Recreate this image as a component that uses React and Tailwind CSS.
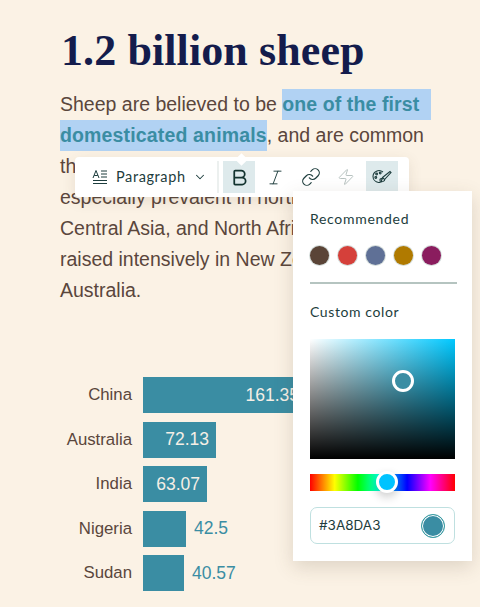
import { Bold, ChevronDown, Italic, Link, Zap } from 'lucide-react';

const swatches = ['#5a4437', '#d5403a', '#5f7096', '#b07a00', '#8a1c5e'];

const rows = [
  { name: 'China', value: '161.35', width: 'w-[163px]', inside: true },
  { name: 'Australia', value: '72.13', width: 'w-[73px]', inside: true },
  { name: 'India', value: '63.07', width: 'w-[64px]', inside: true },
  { name: 'Nigeria', value: '42.5', width: 'w-[43px]' },
  { name: 'Sudan', value: '40.57', width: 'w-[41px]' },
];

function ParagraphIcon() {
  return (
    <svg width="16" height="16" viewBox="0 0 16 16" fill="none" stroke="#1d3d3d" strokeWidth="1">
      <path d="M1 9 L4 1.5 L7 9 M2.2 6.5 H5.8" />
      <path d="M9 2 H15 M9 5 H15 M9 8 H15 M1 11.5 H15 M1 14.5 H15" />
    </svg>
  );
}

function PaletteIcon() {
  return (
    <svg width="20" height="16" viewBox="0 0 20 16" fill="none" stroke="#1d3d3d" strokeWidth="1.1">
      <path d="M11 3 C9 1.5 6.5 1.2 4.5 2.2 C2 3.4 1 5.5 1 7.5 C1 10.5 3.5 13 6.5 13.5 C8 13.7 8.6 12.8 8.1 11.6 C7.6 10.4 8.3 9.6 9.5 9.6 L10.5 9.6" />
      <circle cx="3.8" cy="8.5" r="0.9" />
      <circle cx="4.6" cy="5" r="0.9" />
      <circle cx="8.2" cy="4" r="0.9" />
      <path d="M10.5 8.5 L18 2.5 L19 3.5 L12.5 10.5 Z" />
      <path d="M10.5 9 C9.8 10.5 9.5 12 9 13 C11 12.8 12.5 12 12.8 10.5" />
    </svg>
  );
}

function Toolbar() {
  return (
    <div className="absolute left-[75px] top-[157px] flex h-[40px] w-[334px] items-center rounded-[4px] bg-white pl-[17px] shadow-[0_4px_14px_rgba(90,70,50,0.12)]">
      <div className="absolute left-[162px] top-[-2px] h-[9px] w-[9px] rotate-45 bg-white" />
      <ParagraphIcon />
      <span className="ml-[8px] w-[68px] font-['Lato',sans-serif] text-[14.5px] tracking-[0.6px] text-[#1d3d3d]">Paragraph</span>
      <ChevronDown className="ml-[9px] h-[14px] w-[14px] text-[#1d3d3d]" strokeWidth={1.8} />
      <div className="ml-[10px] h-[32px] w-[2px] bg-[#ecf0ef]" />
      <div className="ml-[4px] flex h-[32px] w-[32px] items-center justify-center bg-[#deeaec]">
        <Bold className="h-[21px] w-[21px] text-[#12332f]" strokeWidth={2} />
      </div>
      <div className="ml-[4px] flex h-[32px] w-[32px] items-center justify-center">
        <Italic className="h-[19px] w-[19px] text-[#1d3d3d]" strokeWidth={1.2} />
      </div>
      <div className="ml-[4px] flex h-[32px] w-[32px] items-center justify-center">
        <Link className="h-[20px] w-[20px] text-[#1d3d3d]" strokeWidth={1.4} />
      </div>
      <div className="ml-[3px] flex h-[32px] w-[32px] items-center justify-center">
        <Zap className="h-[18px] w-[18px] text-[#b5c0be]" strokeWidth={1.3} />
      </div>
      <div className="ml-[4px] flex h-[32px] w-[32px] items-center justify-center bg-[#deeaec]">
        <PaletteIcon />
      </div>
    </div>
  );
}

function ColorPopover() {
  return (
    <div className="absolute left-[293px] top-[191px] h-[370px] w-[179px] bg-white px-[17px] pt-[19px] font-['Lato',sans-serif] text-[#1d3d3d] shadow-[0_6px_18px_rgba(90,70,50,0.18)]">
      <div className="text-[14px] leading-[18px] tracking-[0.7px]">Recommended</div>
      <div className="mt-[18px] flex gap-[9px]">
        {swatches.map(c => (
          <div key={c} className="h-[19px] w-[19px] rounded-full shadow-[0_0_0_1px_#d5dddb]" style={{ backgroundColor: c }} />
        ))}
      </div>
      <div className="mt-[17px] h-[2px] w-[147px] bg-[#b5c4c0]" />
      <div className="mt-[19px] text-[14px] leading-[18px] tracking-[0.6px]">Custom color</div>
      <div className="relative mt-[18px] h-[120px] w-[145px] bg-[linear-gradient(to_top,#000,transparent),linear-gradient(to_right,#fff,#00c8ff)]">
        <div className="absolute left-[82px] top-[31px] h-[22px] w-[22px] rounded-full border-[3px] border-white bg-[#3a8da3]" />
      </div>
      <div className="relative mt-[15px] h-[17px] w-[145px] bg-[linear-gradient(to_right,#f00,#ff0_17%,#0f0_33%,#0ff_50%,#00f_67%,#f0f_83%,#f00)]">
        <div className="absolute left-[66px] top-[-3px] h-[22px] w-[22px] rounded-full border-[3px] border-white bg-[#00c3ff] shadow-[0_4px_10px_rgba(0,0,0,0.2)]" />
      </div>
      <div className="mt-[16px] flex h-[37px] w-[145px] items-center justify-between rounded-[7px] border border-[#bfe0e0] pl-[8px] pr-[9px]">
        <span className="font-['Inter',sans-serif] text-[13.5px] text-[#1d3d3d]">#3A8DA3</span>
        <div className="h-[24px] w-[24px] rounded-full border border-[#3a9da3] bg-[#3a8da3] shadow-[inset_0_0_0_1px_#fff]" />
      </div>
    </div>
  );
}

export default function App() {
  return (
    <div className="relative h-[607px] w-[480px] overflow-hidden bg-[#fbf2e5] font-['Liberation_Sans',sans-serif]">
      <div className="pl-[60px] pt-[26px]">
        <h1 className="ml-[1px] font-['Liberation_Serif',serif] text-[44px] font-bold leading-[50px] tracking-[0.1px] text-[#141c4c]">1.2 billion sheep</h1>
        <p className="mt-[13px] whitespace-nowrap text-[19.5px] leading-[31px] text-[#5a463c]">
          Sheep are believed to be{' '}
          <span className="inline-block bg-[#b1d2f3] pr-[12px] font-bold tracking-[0.1px] text-[#3a8da3]">one of the first</span>
          <br />
          <span className="inline-block bg-[#b1d2f3] font-bold tracking-[0.15px] text-[#3a8da3]">domesticated animals</span>, and are common
          <br />
          throughout the world. They are
          <br />
          especially prevalent in northern Africa,
          <br />
          Central Asia, and North Africa, and are
          <br />
          raised intensively in New Zealand and
          <br />
          Australia.
        </p>
        <div className="ml-[-60px] mt-[71px] flex flex-col gap-[8.5px]">
          {rows.map(r => (
            <div key={r.name} className="flex h-[36px] items-center">
              <div className="w-[132px] text-right text-[16.8px] text-[#5a463c]">{r.name}</div>
              <div className={`ml-[11px] flex h-full items-center justify-end bg-[#3a8da3] pr-[7px] text-[17.5px] text-[#f5efe6] ${r.width}`}>
                {r.inside && r.value}
              </div>
              {!r.inside && <span className="ml-[8px] text-[17.5px] text-[#3a8da3]">{r.value}</span>}
            </div>
          ))}
        </div>
      </div>
      <Toolbar />
      <ColorPopover />
    </div>
  );
}
